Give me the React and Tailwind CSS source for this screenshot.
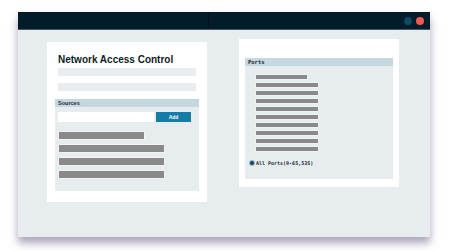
import React from "react";

const Bar = ({ w, h = "h-[8px]" }) => (
  <div className={`${w} ${h} bg-[#8a8a8a] border border-[#f1f3f4]`} />
);

export default function App() {
  const ports = ["w-[53px]", "w-[64px]", "w-[64px]", "w-[64px]", "w-[64px]", "w-[64px]", "w-[64px]", "w-[64px]", "w-[64px]", "w-[64px]"];
  return (
    <div className="w-[450px] h-[250px] bg-white pl-[18px] pt-[12px]" style={{ fontFamily: "'Liberation Sans', Arial, sans-serif" }}>
      <div className="w-[412px] h-[225px] bg-[#e7ecef] flex flex-col shadow-[0_6px_8px_rgba(90,75,115,0.5)]">
        {/* title bar */}
        <div className="h-[18px] bg-[#031c29] flex items-center border-b border-[#46596a]">
          <div className="w-[191px] h-full border-r border-[#010f17]" />
          <div className="flex-1" />
          <div className="flex gap-[4px] pr-[6px]">
            <div className="w-[8px] h-[8px] rounded-full bg-[#0c4867]" />
            <div className="w-[8px] h-[8px] rounded-full bg-[#f25a52]" />
          </div>
        </div>
        <div className="flex items-start pl-[29px] gap-[32px]">
          {/* left card */}
          <div className="mt-[12px] w-[160px] h-[160px] bg-white flex flex-col">
            <div className="pl-[11px] pt-[12px] text-[10px] leading-[12px] font-bold text-[#0e1c26]">Network Access Control</div>
            <div className="ml-[11px] mt-[2px] w-[138px] h-[8px] bg-[#e9edf0]" />
            <div className="ml-[11px] mt-[7px] w-[138px] h-[8px] bg-[#e9edf0]" />
            <div className="mx-[8px] mt-[8px] flex flex-col">
              <div className="h-[8px] bg-[#c5d7df] pl-[3px] text-[5.5px] leading-[8px] font-bold text-[#1e2b33]">Sources</div>
              <div className="h-[84px] bg-[#e7ecef] pl-[3px] pt-[5px] flex flex-col">
                <div className="flex gap-[2px]">
                  <div className="w-[96px] h-[10px] bg-white" />
                  <div className="w-[35px] h-[10px] bg-[#157ca6] text-white text-[5px] font-bold leading-[10px] text-center">Add</div>
                </div>
                <div className="mt-[9px] flex flex-col gap-[4px]">
                  <Bar w="w-[87px]" h="h-[9px]" />
                  <Bar w="w-[107px]" h="h-[9px]" />
                  <Bar w="w-[107px]" h="h-[9px]" />
                  <Bar w="w-[107px]" h="h-[9px]" />
                </div>
              </div>
            </div>
          </div>
          {/* right card */}
          <div className="mt-[9px] w-[160px] h-[148px] bg-white pt-[19px] px-[6px]">
            <div className="h-[8px] bg-[#c5d7df] pl-[3px] text-[5.5px] leading-[8px] font-bold text-[#1e2b33]" style={{ fontFamily: "'DejaVu Sans Mono', monospace" }}>Ports</div>
            <div className="h-[113px] bg-[#e7ecef] pt-[8px] pl-[10px] flex flex-col">
              <div className="flex flex-col gap-[2.5px]">
                {ports.map((w, i) => (
                  <Bar key={i} w={w} h="h-[5.5px]" />
                ))}
              </div>
              <div className="mt-[8px] -ml-[5px] flex items-center gap-[2px] text-[5px] font-bold text-[#1e2b33]" style={{ fontFamily: "'DejaVu Sans Mono', monospace" }}>
                <div className="w-[4px] h-[4px] rounded-full bg-[#0c4867] ring-1 ring-[#9fb3c0]" />
                <span>All Ports(0-65,535)</span>
              </div>
            </div>
          </div>
        </div>
      </div>
    </div>
  );
}
